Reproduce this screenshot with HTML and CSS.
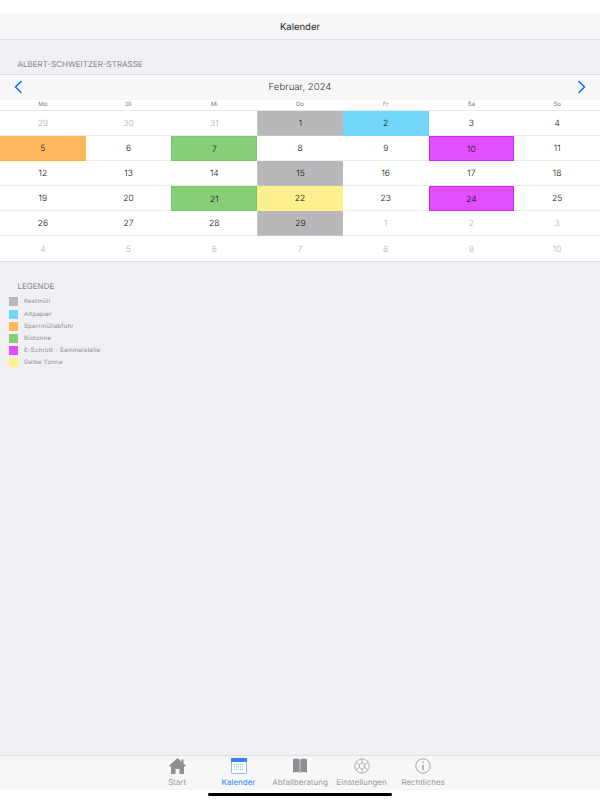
FILE: index.html
```html
<!DOCTYPE html>
<html lang="de">
<head>
    <meta charset="UTF-8">
    <meta name="viewport" content="width=device-width, initial-scale=1.0">
    <title>Kalender</title>
    <link rel="stylesheet" href="styles.css">
</head>
<body>
    <div class="statusbar"></div>

    <!-- Titelleiste -->
    <header class="navbar">Kalender</header>

    <main class="content">
        <h2 class="section-title">ALBERT-SCHWEITZER-STRASSE</h2>

        <!-- Monat -->
        <div class="month-bar">
            <svg class="arrow" width="9" height="14" viewBox="0 0 9 14"><path d="M7.5 1L1.5 7l6 6"/></svg>
            <span>Februar, 2024</span>
            <svg class="arrow" width="9" height="14" viewBox="0 0 9 14"><path d="M1.5 1l6 6-6 6"/></svg>
        </div>

        <div class="weekdays">
            <span>Mo</span><span>Di</span><span>Mi</span><span>Do</span><span>Fr</span><span>Sa</span><span>So</span>
        </div>

        <!-- Kalender -->
        <div class="calendar">
            <div class="day other">29</div><div class="day other">30</div><div class="day other">31</div><div class="day rest">1</div><div class="day papier">2</div><div class="day">3</div><div class="day">4</div>
            <div class="day sperr">5</div><div class="day">6</div><div class="day bio">7</div><div class="day">8</div><div class="day">9</div><div class="day schrott">10</div><div class="day">11</div>
            <div class="day">12</div><div class="day">13</div><div class="day">14</div><div class="day rest">15</div><div class="day">16</div><div class="day">17</div><div class="day">18</div>
            <div class="day">19</div><div class="day">20</div><div class="day bio">21</div><div class="day gelb">22</div><div class="day">23</div><div class="day schrott">24</div><div class="day">25</div>
            <div class="day">26</div><div class="day">27</div><div class="day">28</div><div class="day rest">29</div><div class="day other">1</div><div class="day other">2</div><div class="day other">3</div>
            <div class="day other">4</div><div class="day other">5</div><div class="day other">6</div><div class="day other">7</div><div class="day other">8</div><div class="day other">9</div><div class="day other">10</div>
        </div>

        <!-- Legende -->
        <h2 class="legend-title">LEGENDE</h2>
        <ul class="legend">
            <li><i class="swatch rest"></i>Restmüll</li>
            <li><i class="swatch papier"></i>Altpapier</li>
            <li><i class="swatch sperr"></i>Sperrmüllabfuhr</li>
            <li><i class="swatch bio"></i>Biotonne</li>
            <li><i class="swatch schrott"></i>E-Schrott - Sammelstelle</li>
            <li><i class="swatch gelb"></i>Gelbe Tonne</li>
        </ul>
    </main>

    <!-- Tabs -->
    <nav class="tabbar">
        <a class="tab">
            <svg width="17" height="16" viewBox="0 0 17 16"><path fill="#8e8e93" d="M8.500 0L0 7.800l.7.7H2V16h4.500v-5h4v5H15V8.500h1.300l.7-.7-2.500-2.300V1.500h-2v2.200z"/></svg>
            <span>Start</span>
        </a>
        <a class="tab active">
            <svg width="16" height="16" viewBox="0 0 16 16">
                <rect x=".5" y=".5" width="15" height="15" rx="1" fill="#fff" stroke="#8fb8fb"/>
                <rect x="0" y="0" width="16" height="4" fill="#3184f7"/>
                <path stroke="#8fb8fb" stroke-dasharray="1 1" d="M3 6.500h10M3 9h10M3 11.500h10"/>
            </svg>
            <span>Kalender</span>
        </a>
        <a class="tab">
            <svg width="16" height="16" viewBox="0 0 16 16"><path fill="#8e8e93" d="M1 1.200C3 .2 5.800.2 7.700 1.500V14.800C5.800 13.600 3 13.600 1 14.800zM15 1.200C13 .2 10.200.2 8.300 1.500V14.800C10.200 13.600 13 13.600 15 14.800z"/></svg>
            <span>Abfallberatung</span>
        </a>
        <a class="tab">
            <svg width="16" height="16" viewBox="0 0 16 16" fill="none" stroke="#9a9a9e" stroke-width=".7"><circle cx="8" cy="8" r="7.200"/><path d="M8 5l2.600 1.500v3L8 11l-2.600-1.500v-3z"/><path d="M8 .8V5M8 11v4.200M1.800 4.400l3.600 2.100M10.600 9.500l3.600 2.100M1.800 11.600l3.600-2.100M10.600 6.500l3.600-2.100"/></svg>
            <span>Einstellungen</span>
        </a>
        <a class="tab">
            <svg width="16" height="16" viewBox="0 0 16 16" fill="none" stroke="#8e8e93"><circle cx="8" cy="8" r="7.200" stroke-width=".8"/><path d="M8 6.800v5.400" stroke-width="1.200"/><circle cx="8" cy="4.300" r=".8" fill="#8e8e93" stroke="none"/></svg>
            <span>Rechtliches</span>
        </a>
    </nav>

    <div class="home-area"><div class="home-indicator"></div></div>
</body>
</html>
```
FILE: styles.css
```css
* {
    margin: 0;
    padding: 0;
    box-sizing: border-box;
}

body {
    width: 600px;
    height: 800px;
    display: flex;
    flex-direction: column;
    overflow: hidden;
    font-family: Inter, "Liberation Sans", sans-serif;
    text-rendering: geometricPrecision;
    background-color: #fff;
    color: #222;
}

.statusbar {
    height: 14px;
}

.navbar {
    height: 26px;
    padding-top: 1px;
    line-height: 25px;
    text-align: center;
    font-size: 9.500px;
    background-color: #f7f7f7;
    border-bottom: 1px solid #dcdce0;
}

.content {
    flex: 1;
    background-color: #efeff4;
}

.section-title {
    height: 34px;
    padding: 19px 0 0 17.500px;
    font-size: 8px;
    line-height: 10px;
    font-weight: 400;
    color: #85858a;
}

/* Monat */
.month-bar {
    height: 26px;
    padding: 0 14px 1px;
    display: flex;
    justify-content: space-between;
    align-items: center;
    font-size: 9.600px;
    font-weight: 300;
    color: #333;
    background-color: #f7f7f7;
    border-top: 1px solid #dfdfe2;
}

.arrow {
    fill: none;
    stroke: #0a6cf5;
    stroke-width: 1.500;
}

.weekdays {
    height: 11px;
    display: grid;
    grid-template-columns: repeat(7, 1fr);
    text-align: center;
    font-size: 6px;
    line-height: 10px;
    color: #777;
    background-color: #fff;
    border-bottom: 1px solid #e8e8ea;
}

/* Kalender */
.calendar {
    display: grid;
    grid-template-columns: repeat(7, 1fr);
    grid-auto-rows: 25.050px;
    background-color: #fff;
    border-bottom: 1px solid #dfdfe2;
}

.day {
    display: flex;
    justify-content: center;
    align-items: center;
    padding-top: 2px;
    font-size: 8.500px;
    font-weight: 300;
    color: #111;
    border-bottom: 1px solid #ececee;
}

.day:nth-last-child(-n+7) {
    border-bottom: none;
}

.day.other {
    color: #b4b4b4;
}

.rest {
    background-color: #b8b8ba;
    border: 1px solid #c4c4c6;
    border-width: 0 0 1px 1px;
}

.papier {
    background-color: #72d7f9;
    border-bottom: 1px solid #72d7f9;
}

.sperr {
    background-color: #ffb75e;
    border-bottom: 1px solid #ffb02e;
}

.bio {
    background-color: #87ce78;
    border: 1px solid #78ca68;
}

.schrott {
    background-color: #e14efb;
    border: 1px solid #cc2ce8;
}

.gelb {
    background-color: #fef08e;
    border-bottom: 1px solid #fef08e;
}

/* Legende */
.legend-title {
    margin-top: 19px;
    padding-left: 17.500px;
    font-size: 8px;
    line-height: 10px;
    font-weight: 400;
    color: #85858a;
}

.legend {
    list-style: none;
    margin-top: 4.500px;
    padding-left: 9px;
}

.legend li {
    height: 12.200px;
    display: flex;
    align-items: center;
    font-size: 6px;
    letter-spacing: .25px;
    color: #8e8e93;
}

.swatch {
    width: 9px;
    height: 9px;
    margin-right: 6px;
    border-width: 0;
}

/* Tabs */
.tabbar {
    height: 35px;
    padding-top: 2px;
    display: flex;
    justify-content: center;
    background-color: #f7f7f7;
    border-top: 1px solid #dfdfe2;
}

.tab {
    width: 61.500px;
    display: flex;
    flex-direction: column;
    align-items: center;
    gap: 2px;
    font-size: 8px;
    line-height: 12px;
    color: #9a9a9e;
    white-space: nowrap;
}

.tab.active {
    color: #3184f7;
}

.home-area {
    height: 10px;
    padding-top: 3px;
    display: flex;
    justify-content: center;
    background-color: #fff;
}

.home-indicator {
    width: 184px;
    height: 3px;
    border-radius: 2px;
    background-color: #000;
}
```
